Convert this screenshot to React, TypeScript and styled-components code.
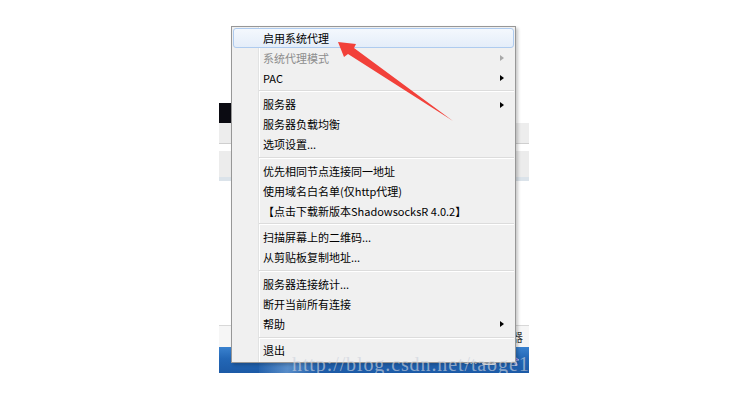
import React from "react";
import styled, { createGlobalStyle } from "styled-components";

const Global = createGlobalStyle`
  html, body { margin: 0; padding: 0; background: #ffffff; }
  body { width: 750px; height: 400px; overflow: hidden; }
`;

const Stage = styled.div`
  width: 750px;
  height: 400px;
  box-sizing: border-box;
  padding-left: 219px;
  display: flex;
  align-items: flex-start;
  background: #ffffff;
`;

const Screen = styled.div`
  position: relative;
  width: 310px;
  height: 373px;
  overflow: hidden;
  display: flex;
  flex-direction: column;
  background: #ffffff;
`;

const Band = styled.div<{ $h?: number; $bg: string; $top?: string; $bottom?: string }>`
  flex: ${(p) => (p.$h ? `0 0 ${p.$h}px` : "1 1 auto")};
  box-sizing: border-box;
  background: ${(p) => p.$bg};
  border-top: ${(p) => (p.$top ? `1px solid ${p.$top}` : "none")};
  border-bottom: ${(p) => (p.$bottom ? `1px solid ${p.$bottom}` : "none")};
  display: flex;
  align-items: center;
`;

const BlackBar = styled.div`
  width: 180px;
  height: 100%;
  background: #0b0b12;
`;

const Tray = styled(Band)`
  justify-content: flex-end;
  padding-right: 6px;
`;

const TrayChar = styled.span`
  font-family: "Noto Sans CJK SC", sans-serif;
  font-size: 12px;
  color: #3a3a3a;
`;

const Taskbar = styled.div`
  flex: 0 0 26px;
  background: linear-gradient(180deg, #3a82cf 0%, #2367b6 45%, #1c5aa6 100%);
  display: flex;
  align-items: center;
  justify-content: flex-end;
  padding-right: 9px;
  gap: 5px;
  position: relative;
`;

const Glare = styled.div`
  position: absolute;
  left: 40px;
  top: 0;
  width: 60px;
  height: 100%;
  background: linear-gradient(100deg, rgba(255,255,255,0) 0%, rgba(160,200,240,0.45) 50%, rgba(255,255,255,0) 100%);
`;

const TrayText = styled.span`
  font-family: "Liberation Sans", sans-serif;
  font-size: 10px;
  color: #ffffff;
  position: relative;
`;

const KeyIcon = styled.svg`
  display: block;
  position: relative;
  margin-right: 10px;
`;

const FlagIcon = styled.svg`
  display: block;
  position: relative;
`;

const Menu = styled.div`
  position: absolute;
  left: 12px;
  top: 26px;
  width: 285px;
  box-sizing: border-box;
  border: 1px solid #979797;
  padding: 1px 1px;
  background: linear-gradient(
    90deg,
    #f0f0f0 0px,
    #f0f0f0 26px,
    #e2e3e3 26px,
    #e2e3e3 27px,
    #ffffff 27px,
    #ffffff 28px,
    #f0f0f0 28px
  );
  box-shadow: 2px 2px 3px rgba(0, 0, 0, 0.22);
  display: flex;
  flex-direction: column;
  z-index: 2;
`;

const Item = styled.div<{ $active?: boolean; $disabled?: boolean }>`
  height: 20px;
  box-sizing: border-box;
  display: flex;
  align-items: center;
  justify-content: space-between;
  padding: 0 9px 0 29px;
  font-family: "Noto Sans CJK SC", "Noto Sans", sans-serif;
  font-size: 11px;
  line-height: 19px;
  color: ${(p) => (p.$disabled ? "#8d8d8d" : "#000000")};
  border-radius: 3px;
  border: 1px solid ${(p) => (p.$active ? "#aecbef" : "transparent")};
  background: ${(p) =>
    p.$active ? "linear-gradient(180deg, #f4f8fd 0%, #e4edf9 100%)" : "transparent"};
  white-space: nowrap;
`;

const SubArrow = styled.span<{ $disabled?: boolean }>`
  width: 0;
  height: 0;
  border-top: 3.5px solid transparent;
  border-bottom: 3.5px solid transparent;
  border-left: 4px solid ${(p) => (p.$disabled ? "#a8a8a8" : "#000000")};
`;

const Separator = styled.div`
  height: 6.6px;
  display: flex;
  align-items: center;
  padding-left: 26px;
  &::after {
    content: "";
    flex: 1;
    height: 1px;
    background: #dcdcdc;
    border-bottom: 1px solid #ffffff;
  }
`;

const ArrowSvg = styled.svg`
  position: absolute;
  left: 0;
  top: 0;
  z-index: 3;
  pointer-events: none;
`;

const Watermark = styled.div`
  position: absolute;
  left: 73px;
  top: 354px;
  font-family: "Liberation Serif", serif;
  font-size: 20px;
  line-height: 20px;
  letter-spacing: 0.9px;
  color: rgba(205, 210, 220, 0.65);
  white-space: nowrap;
  z-index: 4;
  pointer-events: none;
`;

type Entry =
  | { sep: true }
  | { sep?: false; label: string; active?: boolean; disabled?: boolean; sub?: boolean };

const entries: Entry[] = [
  { label: "启用系统代理", active: true },
  { label: "系统代理模式", disabled: true, sub: true },
  { label: "PAC", sub: true },
  { sep: true },
  { label: "服务器", sub: true },
  { label: "服务器负载均衡" },
  { label: "选项设置..." },
  { sep: true },
  { label: "优先相同节点连接同一地址" },
  { label: "使用域名白名单(仅http代理)" },
  { label: "【点击下载新版本ShadowsocksR 4.0.2】" },
  { sep: true },
  { label: "扫描屏幕上的二维码..." },
  { label: "从剪贴板复制地址..." },
  { sep: true },
  { label: "服务器连接统计..." },
  { label: "断开当前所有连接" },
  { label: "帮助", sub: true },
  { sep: true },
  { label: "退出" },
];

export default function App() {
  return (
    <>
      <Global />
      <Stage>
        <Screen>
          <Band $h={103} $bg="#ffffff" />
          <Band $h={20} $bg="#ffffff">
            <BlackBar />
          </Band>
          <Band $h={21} $bg="#ededed" $bottom="#cfcfcf" />
          <Band $h={6} $bg="#ffffff" />
          <Band $h={27} $bg="#ececec" $top="#ffffff" />
          <Band $h={4} $bg="#dbe3ea" />
          <Band $bg="#ffffff" />
          <Tray $h={22} $bg="#f6f6f6" $top="#d8d8d8">
            <TrayChar>器</TrayChar>
          </Tray>
          <Taskbar>
            <Glare />
            <TrayText>CH</TrayText>
            <KeyIcon width="14" height="9" viewBox="0 0 14 9">
              <rect x="0.5" y="0.5" width="13" height="8" rx="1" fill="#d8dde4" stroke="#eef2f6" />
              <path d="M2 3h10M2 5h10M4 7h6" stroke="#7a8594" strokeWidth="0.8" />
            </KeyIcon>
            <FlagIcon width="9" height="12" viewBox="0 0 9 12">
              <path d="M1 1 L8 6 L4.5 6.5 L6 11 L4.5 11.5 L3 7 L1 9 Z" fill="#6a5ce0" stroke="#e8e4ff" strokeWidth="0.6" />
            </FlagIcon>
          </Taskbar>

          <Menu>
            {entries.map((e, i) =>
              e.sep ? (
                <Separator key={i} />
              ) : (
                <Item key={i} $active={e.active} $disabled={e.disabled}>
                  <span>{e.label}</span>
                  {e.sub && <SubArrow $disabled={e.disabled} />}
                </Item>
              )
            )}
          </Menu>

          <ArrowSvg width="310" height="373" viewBox="0 0 310 373">
            <polygon
              points="119,42 137,44 135,48 234,121 129,54 125,57"
              fill="#f2413a"
            />
          </ArrowSvg>

          <Watermark>http://blog.csdn.net/taoge1</Watermark>
        </Screen>
      </Stage>
    </>
  );
}
